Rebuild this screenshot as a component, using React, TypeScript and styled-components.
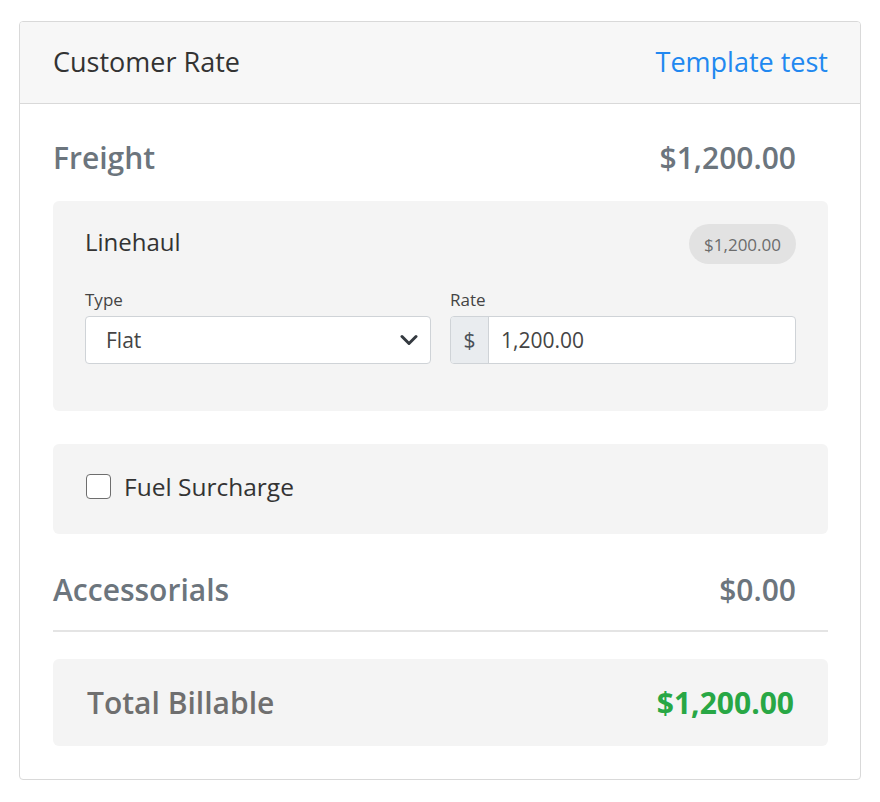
import styled, { createGlobalStyle } from "styled-components";

const GlobalStyle = createGlobalStyle`
  html, body {
    margin: 0;
    padding: 0;
    background: #ffffff;
  }
  body {
    font-family: "Open Sans", "Noto Sans", sans-serif;
    color: #212529;
  }
  * {
    box-sizing: border-box;
  }
`;

const Page = styled.div`
  padding: 21px 19px 22px 19px;
  width: 880px;
`;

const Card = styled.section`
  width: 842px;
  border: 1px solid #d9d9d9;
  border-radius: 4px;
  background: #ffffff;
  overflow: hidden;
`;

const CardHeader = styled.header`
  display: flex;
  justify-content: space-between;
  align-items: center;
  height: 82px;
  padding: 0 32px 2px 33px;
  background: #f7f7f7;
  border-bottom: 1px solid #d9d9d9;
`;

const HeaderTitle = styled.h2`
  margin: 0;
  font-size: 27px;
  font-weight: 400;
  color: #333333;
`;

const HeaderLink = styled.a`
  font-size: 27px;
  color: #2188f0;
  text-decoration: none;
  cursor: pointer;
`;

const CardBody = styled.div`
  display: flex;
  flex-direction: column;
  padding: 0 32px 33px 33px;
`;

const SectionRow = styled.div<{ $top: number; $bottom: number }>`
  display: flex;
  justify-content: space-between;
  align-items: center;
  padding: ${(p) => p.$top}px 32px ${(p) => p.$bottom}px 0;
`;

const SectionTitle = styled.h3`
  margin: 0;
  font-size: 30px;
  font-weight: 600;
  color: #6c757d;
`;

const SectionAmount = styled.span`
  font-size: 30px;
  font-weight: 600;
  color: #6c757d;
`;

const Panel = styled.div`
  background: #f4f4f4;
  border-radius: 6px;
`;

const LinehaulPanel = styled(Panel)`
  padding: 23px 32px 47px 32px;
`;

const LineHead = styled.div`
  display: flex;
  justify-content: space-between;
  align-items: center;
  margin-bottom: 24px;
`;

const LineTitle = styled.span`
  margin-bottom: 6px;
  font-size: 24px;
  color: #333333;
`;

const Badge = styled.span`
  display: inline-flex;
  align-items: center;
  height: 40px;
  padding: 0 15px;
  border-radius: 20px;
  background: #e2e2e2;
  color: #6c6c6c;
  font-size: 17px;
`;

const FieldGrid = styled.div`
  display: grid;
  grid-template-columns: 1fr 1fr;
  column-gap: 19px;
`;

const Field = styled.label`
  display: flex;
  flex-direction: column;
  gap: 5px;
`;

const FieldLabel = styled.span`
  font-size: 17px;
  color: #444444;
`;

const SelectBox = styled.div`
  position: relative;
  display: flex;
  align-items: center;
  height: 48px;
  padding: 0 20px;
  background: #ffffff;
  border: 1px solid #cfd3d7;
  border-radius: 4px;
  font-size: 21px;
  color: #444444;
`;

const Chevron = styled.svg`
  position: absolute;
  right: 12px;
  top: 50%;
  transform: translateY(-50%);
`;

const InputGroup = styled.div`
  display: flex;
  height: 48px;
  border: 1px solid #cfd3d7;
  border-radius: 4px;
  overflow: hidden;
  background: #ffffff;
`;

const Addon = styled.span`
  display: flex;
  align-items: center;
  justify-content: center;
  width: 38px;
  background: #e9ecef;
  border-right: 1px solid #cfd3d7;
  font-size: 21px;
  color: #495057;
`;

const InputText = styled.span`
  display: flex;
  align-items: center;
  padding-left: 12px;
  font-size: 21px;
  color: #444444;
`;

const FuelPanel = styled(Panel)`
  display: flex;
  align-items: center;
  gap: 13px;
  height: 90px;
  margin-top: 33px;
  padding: 0 33px 5px 33px;
`;

const CheckBox = styled.span`
  width: 25px;
  height: 25px;
  border: 1.5px solid #6e6e6e;
  border-radius: 4px;
  background: #ffffff;
`;

const FuelLabel = styled.span`
  font-size: 24.5px;
  color: #333333;
`;

const Divider = styled.hr`
  margin: 0;
  border: 0;
  border-top: 2px solid #e4e4e4;
`;

const TotalPanel = styled(Panel)`
  display: flex;
  justify-content: space-between;
  align-items: center;
  height: 87px;
  margin-top: 27px;
  padding: 0 34px 0 34px;
`;

const TotalLabel = styled.span`
  font-size: 30px;
  font-weight: 600;
  color: #6f6f6f;
`;

const TotalAmount = styled.span`
  font-size: 30px;
  font-weight: 700;
  color: #28a745;
`;

export default function App() {
  return (
    <>
      <GlobalStyle />
      <Page>
        <Card>
          <CardHeader>
            <HeaderTitle>Customer Rate</HeaderTitle>
            <HeaderLink>Template test</HeaderLink>
          </CardHeader>
          <CardBody>
            <SectionRow $top={33} $bottom={23}>
              <SectionTitle>Freight</SectionTitle>
              <SectionAmount>$1,200.00</SectionAmount>
            </SectionRow>

            <LinehaulPanel>
              <LineHead>
                <LineTitle>Linehaul</LineTitle>
                <Badge>$1,200.00</Badge>
              </LineHead>
              <FieldGrid>
                <Field>
                  <FieldLabel>Type</FieldLabel>
                  <SelectBox>
                    Flat
                    <Chevron width="18" height="12" viewBox="0 0 18 12">
                      <path
                        d="M2 2.5 L9 9.5 L16 2.5"
                        fill="none"
                        stroke="#343a40"
                        strokeWidth="3"
                        strokeLinecap="round"
                        strokeLinejoin="round"
                      />
                    </Chevron>
                  </SelectBox>
                </Field>
                <Field>
                  <FieldLabel>Rate</FieldLabel>
                  <InputGroup>
                    <Addon>$</Addon>
                    <InputText>1,200.00</InputText>
                  </InputGroup>
                </Field>
              </FieldGrid>
            </LinehaulPanel>

            <FuelPanel>
              <CheckBox />
              <FuelLabel>Fuel Surcharge</FuelLabel>
            </FuelPanel>

            <SectionRow $top={35} $bottom={20}>
              <SectionTitle>Accessorials</SectionTitle>
              <SectionAmount>$0.00</SectionAmount>
            </SectionRow>
            <Divider />

            <TotalPanel>
              <TotalLabel>Total Billable</TotalLabel>
              <TotalAmount>$1,200.00</TotalAmount>
            </TotalPanel>
          </CardBody>
        </Card>
      </Page>
    </>
  );
}
